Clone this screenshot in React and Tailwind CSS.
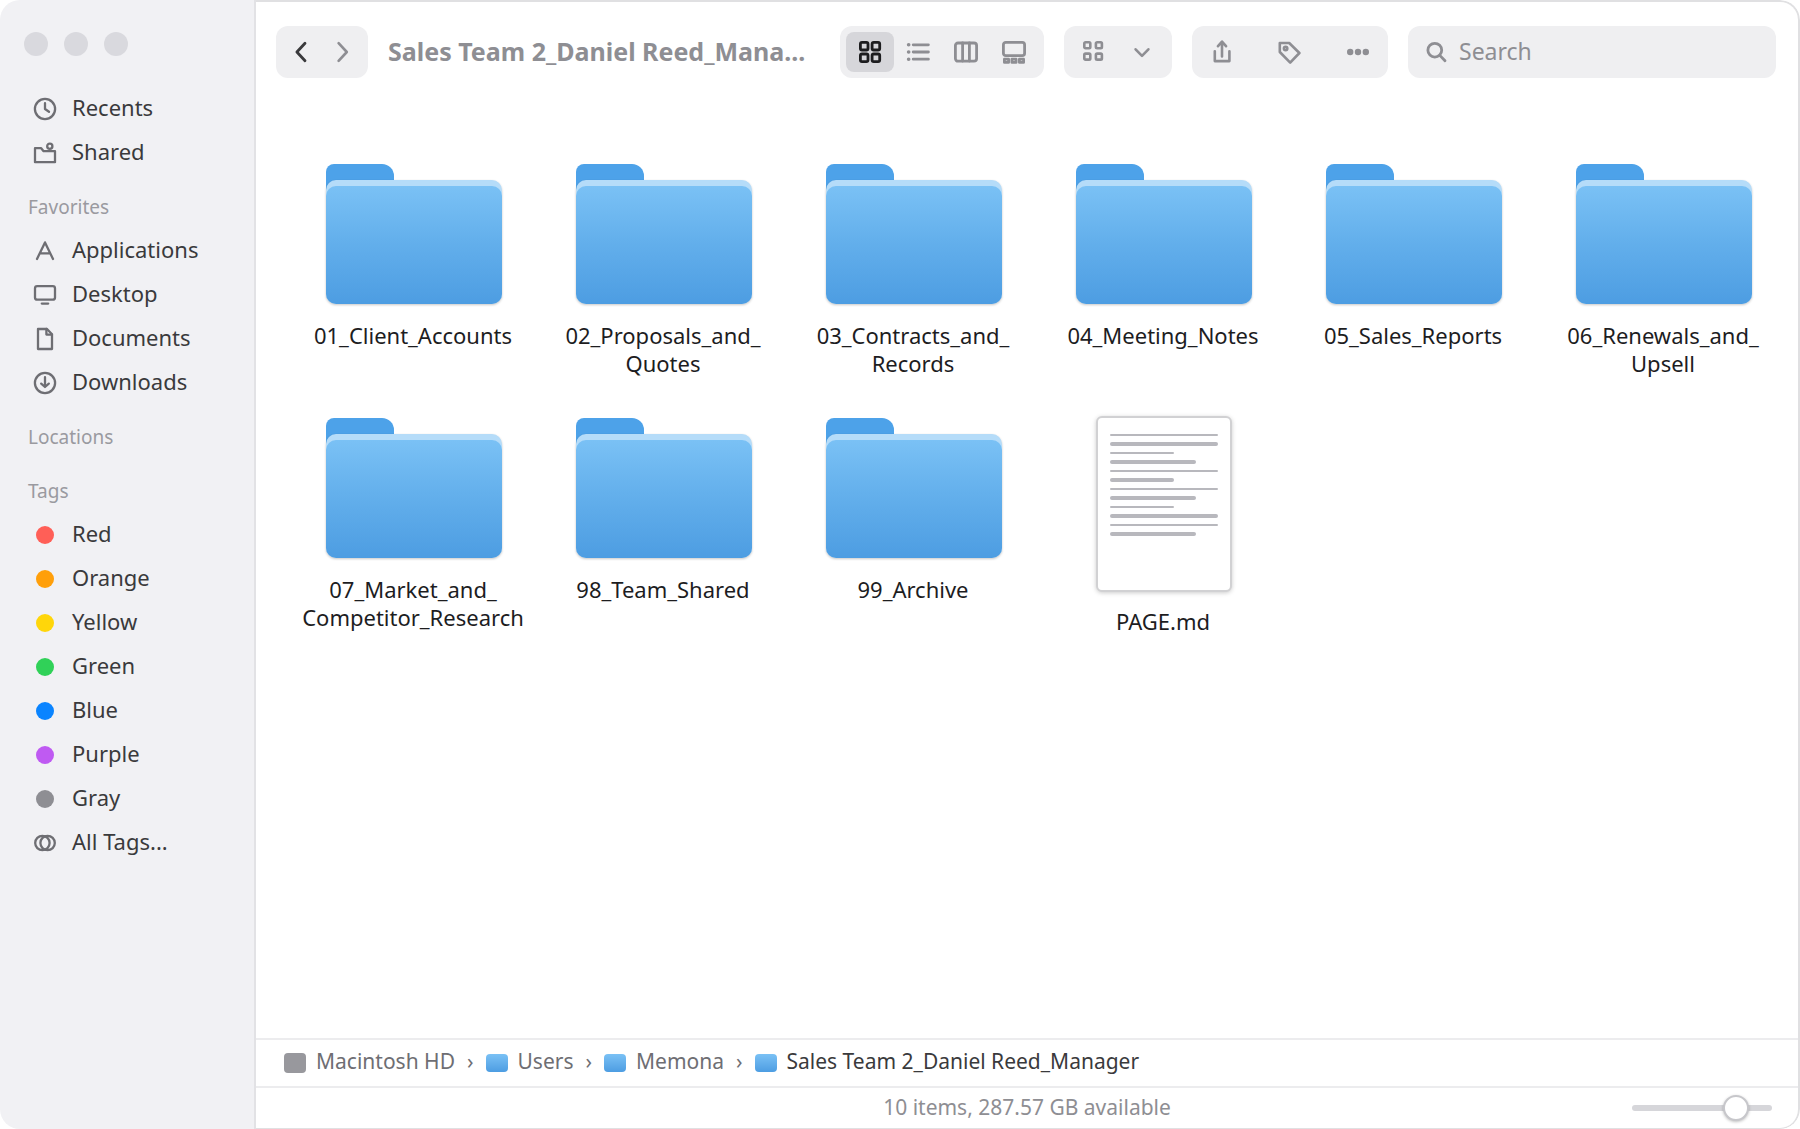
import { useState } from 'react';

const libraryItems = [
  { name: 'Recents', icon: 'clock' },
  { name: 'Shared', icon: 'shared' },
];

const favorites = [
  { name: 'Applications', icon: 'apps' },
  { name: 'Desktop', icon: 'desktop' },
  { name: 'Documents', icon: 'document' },
  { name: 'Downloads', icon: 'download' },
];

const tags = [
  { name: 'Red', color: 'bg-[#ff5f57]' },
  { name: 'Orange', color: 'bg-[#ff9f0a]' },
  { name: 'Yellow', color: 'bg-[#ffd60a]' },
  { name: 'Green', color: 'bg-[#30d158]' },
  { name: 'Blue', color: 'bg-[#0a84ff]' },
  { name: 'Purple', color: 'bg-[#bf5af2]' },
  { name: 'Gray', color: 'bg-[#8e8e93]' },
];

// each entry of `lines` is one line of the label
const files = [
  { lines: ['01_Client_Accounts'], type: 'folder' },
  { lines: ['02_Proposals_and_', 'Quotes'], type: 'folder' },
  { lines: ['03_Contracts_and_', 'Records'], type: 'folder' },
  { lines: ['04_Meeting_Notes'], type: 'folder' },
  { lines: ['05_Sales_Reports'], type: 'folder' },
  { lines: ['06_Renewals_and_', 'Upsell'], type: 'folder' },
  { lines: ['07_Market_and_', 'Competitor_Research'], type: 'folder' },
  { lines: ['98_Team_Shared'], type: 'folder' },
  { lines: ['99_Archive'], type: 'folder' },
  { lines: ['PAGE.md'], type: 'page' },
];

const path = ['Macintosh HD', 'Users', 'Memona', 'Sales Team 2_Daniel Reed_Manager'];

const shapes = {
  clock: (
    <>
      <circle cx="12" cy="12" r="10.1" />
      <path d="M12 6.2V12l4 2.8" />
    </>
  ),
  shared: (
    <>
      <path d="M2 7.2h6.2l2.4 3H22v11H2z" />
      <circle cx="16.8" cy="5.2" r="2.6" />
    </>
  ),
  apps: <path d="M4 20l8-16.6L20 20M6.8 14.4h10.4" />,
  desktop: (
    <>
      <rect x="2" y="3.2" width="20" height="13.4" rx="2.2" />
      <path d="M8.8 20.6h6.4" />
    </>
  ),
  document: (
    <>
      <path d="M5 2h9l5 5.2V22H5z" />
      <path d="M13.4 2v5.6H19" />
    </>
  ),
  download: (
    <>
      <circle cx="12" cy="12" r="10.1" />
      <path d="M12 6.2v9.8M8.2 12.6l3.8 3.4 3.8-3.4" />
    </>
  ),
  allTags: (
    <>
      <circle cx="9.4" cy="12" r="7.2" />
      <circle cx="14.6" cy="12" r="7.2" />
    </>
  ),
  back: <path d="M16 3.2L7.9 12l8.1 8.8" />,
  forward: <path d="M7.6 3.2l8.2 8.8-8.2 8.8" />,
  grid: (
    <>
      <rect x="2.4" y="2.4" width="7.6" height="7.6" rx="1.6" />
      <rect x="14.1" y="2.4" width="7.6" height="7.6" rx="1.6" />
      <rect x="2.4" y="14" width="7.6" height="7.6" rx="1.6" />
      <rect x="14.1" y="14" width="7.6" height="7.6" rx="1.6" />
    </>
  ),
  list: (
    <>
      <path d="M7.2 4.8h15.2M7.2 12h15.2M7.2 19.2h15.2" />
      <path d="M2.6 4.8h.1M2.6 12h.1M2.6 19.2h.1" strokeWidth="3.6" />
    </>
  ),
  columns: (
    <>
      <rect x="1.4" y="3" width="21.2" height="18.2" rx="2.6" />
      <path d="M8.6 3v18M15.4 3v18" />
    </>
  ),
  gallery: (
    <>
      <rect x="1.4" y="2.4" width="21.2" height="13.2" rx="2.4" />
      <path d="M2.4 19.2h4.2v3.2H2.4zM9.9 19.2h4.2v3.2H9.9zM17.4 19.2h4.2v3.2h-4.2z" />
    </>
  ),
  group: (
    <>
      <rect x="2.3" y="2.3" width="6" height="6" rx="1.2" />
      <rect x="13.9" y="2.3" width="6" height="6" rx="1.2" />
      <rect x="2.3" y="13.6" width="6" height="6" rx="1.2" />
      <rect x="13.9" y="13.6" width="6" height="6" rx="1.2" />
    </>
  ),
  chevronDown: <path d="M5.6 9.3l6.4 6.6 6.4-6.6" />,
  share: (
    <>
      <path d="M12 16.4V2.4M8 6.2l4-4.6 4 4.6" />
      <path d="M4.8 11.2v9.9h14.6v-9.9" />
    </>
  ),
  tag: (
    <>
      <path d="M1.8 3h9.4l10.2 10-9.2 9.6L1.8 12z" />
      <circle cx="7.6" cy="8.4" r="1.7" />
    </>
  ),
  more: (
    <g fill="currentColor" stroke="none">
      <circle cx="4.2" cy="12" r="3.2" />
      <circle cx="12" cy="12" r="3.2" />
      <circle cx="19.8" cy="12" r="3.2" />
    </g>
  ),
  search: (
    <>
      <circle cx="10.8" cy="10.2" r="6.9" />
      <path d="M15.8 15.4l5.2 5.4" />
    </>
  ),
};

const Icon = ({ name, stroke = 2.3, className = '' }) => (
  <svg
    viewBox="0 0 24 24"
    className={`size-6 shrink-0 ${className}`}
    fill="none"
    stroke="currentColor"
    strokeWidth={stroke}
    strokeLinecap="round"
    strokeLinejoin="round"
    aria-hidden="true"
  >
    {shapes[name]}
  </svg>
);

const SidebarItem = ({ name, icon, color }) => (
  <li>
    <a href="#" className="flex h-11 items-center gap-[15px] pl-[33px] text-[22px] text-[#3a3a3c]">
      <span className="flex w-6 justify-center pt-0.5">
        {icon ? (
          <Icon name={icon} className="text-[#6e6e73]" />
        ) : (
          <span className={`size-[18px] rounded-full ${color}`} />
        )}
      </span>
      <span className="pb-0.5">{name}</span>
    </a>
  </li>
);

const SidebarHeading = ({ children }) => (
  <h2 className="pt-5 pb-2 pl-7 text-[19px] leading-[26px] text-[#9a9aa0]">{children}</h2>
);

const Sidebar = () => (
  <aside className="w-64 shrink-0 border-r-2 border-[#e2e2e5] bg-[#f1f1f4]">
    <div className="flex gap-4 px-6 pt-8 pb-[30px]">
      <button aria-label="Close" className="size-6 rounded-full bg-[#d9d9de]" />
      <button aria-label="Minimize" className="size-6 rounded-full bg-[#d9d9de]" />
      <button aria-label="Zoom" className="size-6 rounded-full bg-[#d9d9de]" />
    </div>
    <nav>
      <ul>
        {libraryItems.map((item) => (
          <SidebarItem key={item.name} {...item} />
        ))}
      </ul>
      <SidebarHeading>Favorites</SidebarHeading>
      <ul>
        {favorites.map((item) => (
          <SidebarItem key={item.name} {...item} />
        ))}
      </ul>
      <SidebarHeading>Locations</SidebarHeading>
      <SidebarHeading>Tags</SidebarHeading>
      <ul>
        {tags.map((tag) => (
          <SidebarItem key={tag.name} {...tag} />
        ))}
        <SidebarItem name="All Tags..." icon="allTags" />
      </ul>
    </nav>
  </aside>
);

const views = [
  { id: 'grid', label: 'Icons' },
  { id: 'list', label: 'List' },
  { id: 'columns', label: 'Columns' },
  { id: 'gallery', label: 'Gallery' },
];

const Toolbar = () => {
  const [view, setView] = useState('grid');
  const [query, setQuery] = useState('');

  return (
    <header className="flex items-center gap-5 pt-6 pr-[22px] pl-5 text-[#8e8e93]">
      <div className="flex h-[52px] shrink-0 items-center rounded-xl bg-[#efeff1] px-1">
        <button aria-label="Back" className="flex w-[42px] justify-center text-[#3a3a3c]">
          <Icon name="back" stroke={2.8} />
        </button>
        <button aria-label="Forward" className="flex w-[42px] justify-center">
          <Icon name="forward" stroke={2.6} />
        </button>
      </div>

      <h1 title="Sales Team 2_Daniel Reed_Manager" className="min-w-0 flex-1 text-[25px] font-bold whitespace-nowrap">
        Sales Team 2_Daniel Reed_Mana...
      </h1>

      <div className="flex h-[52px] shrink-0 items-center rounded-xl bg-[#efeff1] px-1.5">
        {views.map(({ id, label }) => (
          <button
            key={id}
            aria-label={label}
            aria-pressed={view === id}
            onClick={() => setView(id)}
            className={`flex h-10 w-12 items-center justify-center rounded-lg ${view === id ? 'bg-[#d6d6da] text-[#1d1d1f]' : ''
              }`}
          >
            <Icon name={id} stroke={2.8} />
          </button>
        ))}
      </div>

      <button aria-label="Group items" className="flex h-[52px] w-[108px] shrink-0 items-center justify-between rounded-xl bg-[#efeff1] px-[18px]">
        <Icon name="group" stroke={2.6} />
        <Icon name="chevronDown" stroke={2.6} />
      </button>

      <div className="flex h-[52px] w-[196px] shrink-0 items-center justify-between rounded-xl bg-[#efeff1] px-[18px]">
        <button aria-label="Share"><Icon name="share" stroke={2.6} /></button>
        <button aria-label="Tags"><Icon name="tag" stroke={2.6} /></button>
        <button aria-label="More"><Icon name="more" /></button>
      </div>

      <label className="flex h-[52px] w-[368px] shrink-0 items-center gap-[11px] rounded-xl bg-[#efeff1] px-4">
        <Icon name="search" stroke={2.8} />
        <input
          type="text"
          aria-label="Search"
          placeholder="Search"
          value={query}
          onChange={(e) => setQuery(e.target.value)}
          className="w-full min-w-0 bg-transparent pb-0.5 text-[23px] outline-none placeholder:text-[#8e8e93]"
        />
      </label>
    </header>
  );
};

const FolderIcon = () => (
  <svg viewBox="0 0 176 144" className="h-36 w-44 overflow-visible" aria-hidden="true">
    <defs>
      <linearGradient id="folder-front" x1="0" y1="0" x2="0" y2="1">
        <stop offset="0" stopColor="#7ac1f5" />
        <stop offset="0.45" stopColor="#64b0ec" />
        <stop offset="1" stopColor="#4d9de2" />
      </linearGradient>
    </defs>
    <path d="M0 40V10a8 8 0 0 1 8-8h48a12 12 0 0 1 12 12v26z" fill="#4da2e9" />
    <g className="drop-shadow-[0_1px_1px_rgba(0,0,0,0.22)]">
      <rect y="18" width="176" height="124" rx="10" fill="#b5dcf9" />
      <rect y="24" width="176" height="118" rx="10" fill="url(#folder-front)" />
    </g>
  </svg>
);

// thin and thick rules alternate, 9px apart
const pageRules = [108, 108, 64, 86, 108, 64, 108, 86, 64, 108, 108, 86];

const PageIcon = () => (
  <svg viewBox="0 0 136 176" className="h-44 w-[136px] overflow-visible" aria-hidden="true">
    <rect
      x="1"
      y="1"
      width="134"
      height="174"
      rx="5"
      fill="#fff"
      stroke="#d1d1d3"
      strokeWidth="2"
      className="drop-shadow-[0_1px_2px_rgba(0,0,0,0.2)]"
    />
    {pageRules.map((width, i) => {
      const height = i % 2 ? 4 : 2;
      return (
        <rect key={i} x="14" y={19 + i * 9 - height / 2} width={width} height={height} rx={height / 2} fill="#b8b8bd" />
      );
    })}
  </svg>
);

const FileTile = ({ lines, type }) => (
  <li>
    <button className="flex w-full flex-col items-center gap-[15px] text-[22px] leading-7 text-[#1d1d1f]">
      {type === 'folder' ? <FolderIcon /> : <PageIcon />}
      <span className="pr-0.5">
        {lines.map((line) => (
          <span key={line} className="block whitespace-nowrap">{line}</span>
        ))}
      </span>
    </button>
  </li>
);

const PathBar = () => (
  <nav aria-label="Path" className="border-t-2 border-[#ececee] px-7">
    <ol className="flex h-[46px] items-center gap-3 pb-0.5 text-[21px] text-[#6e6e73]">
      {path.map((name, i) => (
        <li key={name} className="flex items-center gap-3">
          {i > 0 && <span aria-hidden="true">›</span>}
          <a href="#" className={`flex items-center gap-2.5 ${i === path.length - 1 ? 'text-[#3a3a3c]' : ''}`}>
            <span className="pt-0.5">
              {i === 0 ? (
                <span className="block h-5 w-[22px] rounded bg-[#98989d]" />
              ) : (
                <span className="block h-[18px] w-[22px] rounded bg-linear-to-b from-[#7ac1f5] to-[#4d9de2]" />
              )}
            </span>
            {name}
          </a>
        </li>
      ))}
    </ol>
  </nav>
);

const StatusBar = () => {
  const [size, setSize] = useState(80);

  return (
    <footer className="grid h-[42px] grid-cols-[1fr_auto_1fr] items-center border-t-2 border-[#ececee] px-[26px] text-[21px] text-[#8e8e93]">
      <span />
      <p>10 items, 287.57 GB available</p>
      <input
        type="range"
        aria-label="Icon size"
        value={size}
        onChange={(e) => setSize(Number(e.target.value))}
        className="h-[26px] w-[140px] appearance-none justify-self-end bg-transparent [&::-webkit-slider-runnable-track]:h-1.5 [&::-webkit-slider-runnable-track]:rounded-full [&::-webkit-slider-runnable-track]:bg-[#d6d6da] [&::-webkit-slider-thumb]:-mt-2.5 [&::-webkit-slider-thumb]:size-[26px] [&::-webkit-slider-thumb]:appearance-none [&::-webkit-slider-thumb]:rounded-full [&::-webkit-slider-thumb]:border-2 [&::-webkit-slider-thumb]:border-[#c7c7cb] [&::-webkit-slider-thumb]:bg-white [&::-webkit-slider-thumb]:shadow-[0_1px_3px_rgba(0,0,0,0.25)]"
      />
    </footer>
  );
};

export default function App() {
  return (
    <div className="flex min-h-screen overflow-hidden rounded-[20px] bg-white font-['Noto_Sans',sans-serif]">
      <Sidebar />
      <div className="flex min-w-0 flex-1 flex-col rounded-r-[20px] border-t-2 border-r-2 border-b border-[#e0e0e2]">
        <Toolbar />
        <main className="flex-1 pt-[84px] pr-5 pl-11">
          <ul className="grid grid-cols-6 gap-x-[22px] gap-y-[39px]">
            {files.map((file) => (
              <FileTile key={file.lines[0]} {...file} />
            ))}
          </ul>
        </main>
        <PathBar />
        <StatusBar />
      </div>
    </div>
  );
}
